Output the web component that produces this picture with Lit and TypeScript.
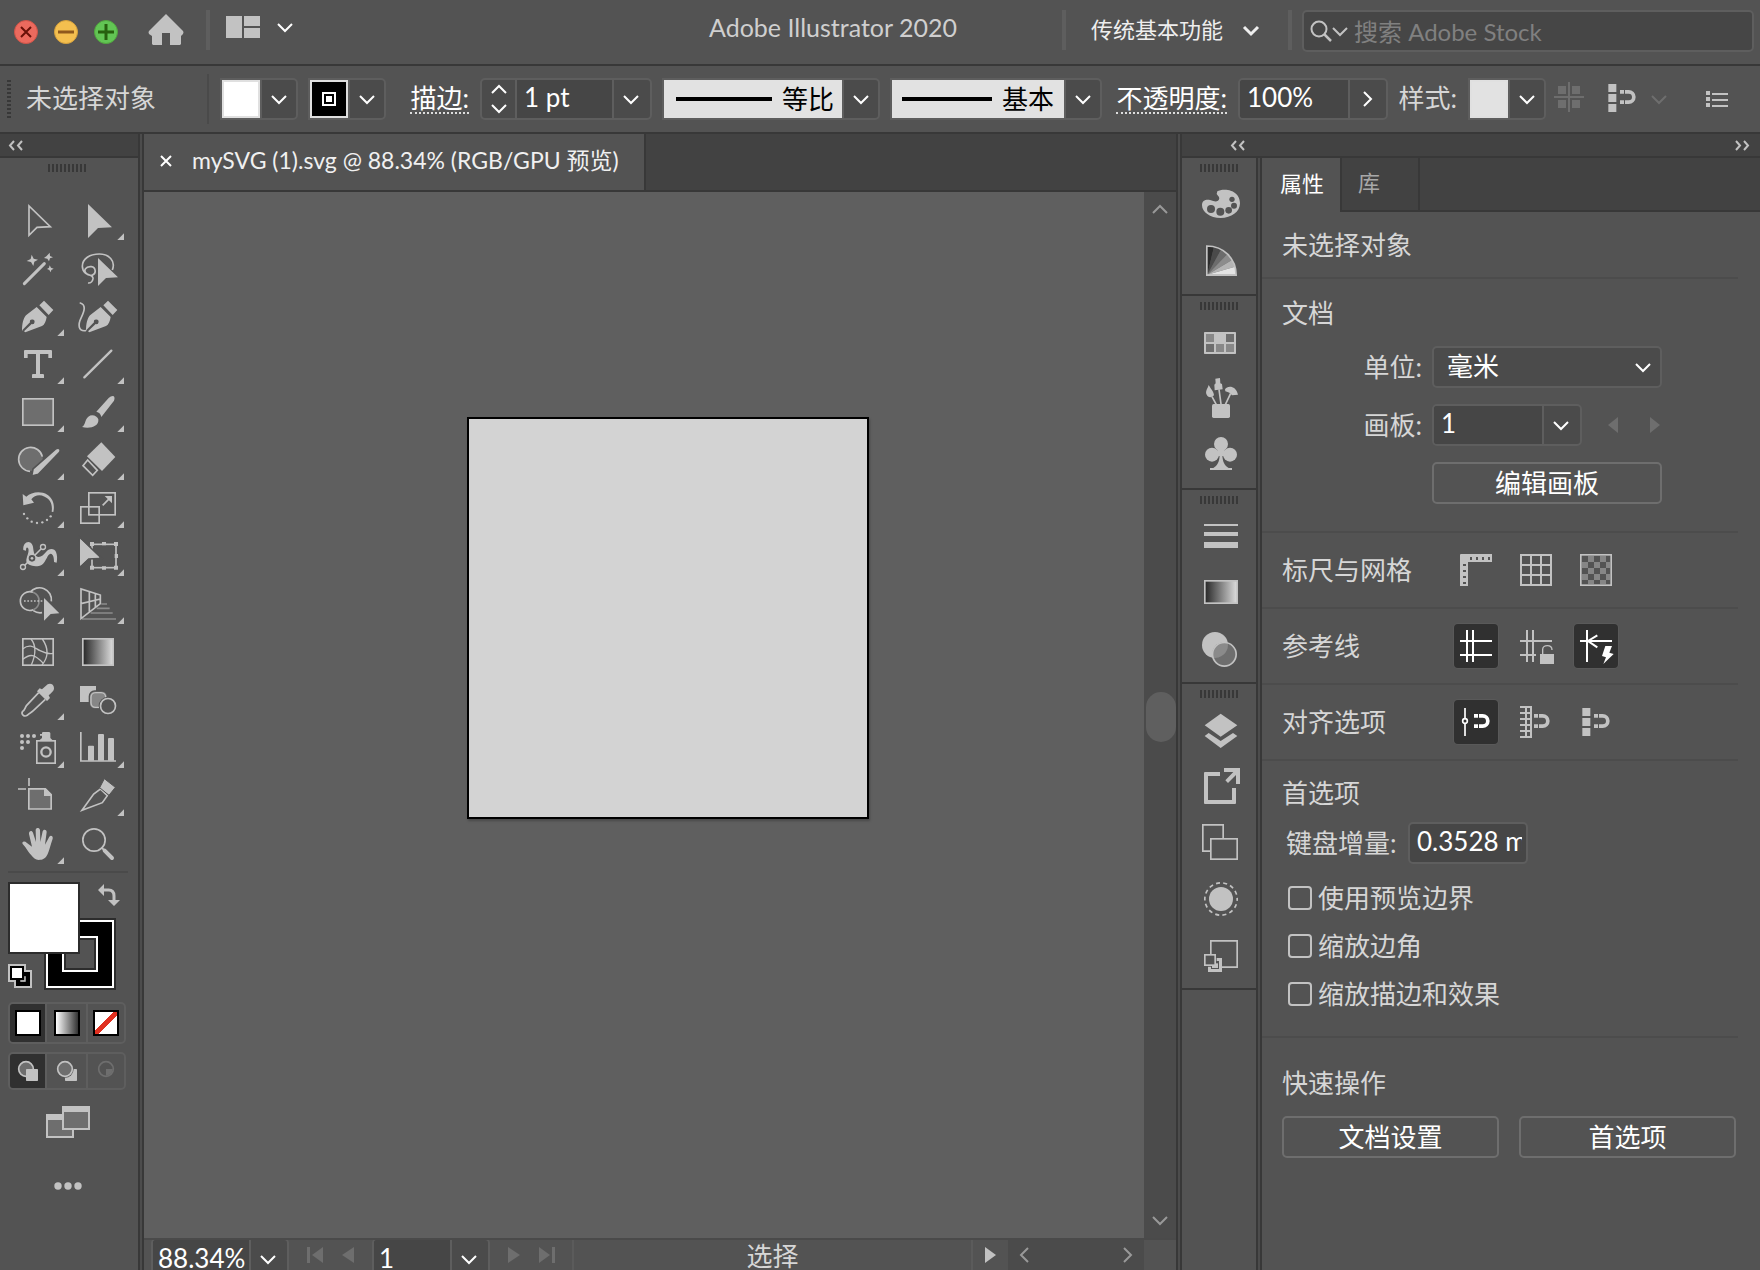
import { LitElement, html, svg, css, nothing } from "lit";
import { customElement, state } from "lit/decorators.js";
import { classMap } from "lit/directives/class-map.js";

type Glyph = ReturnType<typeof svg>;

interface Tool {
  name: string;
  more: boolean;
  glyph: Glyph;
}

/* Drawings use three units to the pixel; each sheet lists glyphs in rows. */
const UNIT = 3;

const tools: Tool[] = [
  { name: "选择工具", more: false, glyph: svg`<path class="line" stroke-width="5" d="M87 48V136L111 112L151 110Z"/>` },
  { name: "直接选择工具", more: true, glyph: svg`<path class="solid" d="M264 42V144L294 114L336 112Z"/>` },
  { name: "魔棒工具", more: false, glyph: svg`
    <path class="line" stroke-width="9" stroke-linecap="round" d="M73 281L133 221"/>
    <path class="solid" d="M95 194L101 206L114 209L103 215L100 228L93 216L80 213L92 207ZM149 188L150 198L159 202L150 205L147 214L142 206L132 204L140 198ZM149 226L153 233L161 236L154 240L152 247L148 240L141 237L147 233Z"/>` },
  { name: "套索工具", more: false, glyph: svg`
    <path class="line" stroke-width="5" d="M337 240C348 212 326 192 298 192C270 192 247 206 247 229C247 246 262 258 276 256C290 252 288 232 274 230C258 228 248 242 260 251C270 258 280 256 279 266C278 274 272 280 264 279"/>
    <path class="solid" d="M294 204V288L318 264L354 262Z"/>` },
  { name: "钢笔工具", more: true, glyph: svg`
    <path class="solid" d="M118 346L132 332L160 360L146 375ZM66 424C66 400 70 386 78 376L110 351L140 381C138 394 134 404 126 408L76 427L72 424L95 402A7 7 0 1 0 90 397L68 419Z"/>` },
  { name: "曲率工具", more: false, glyph: svg`
    <path class="solid" d="M310 346L324 332L352 360L338 375ZM258 424C258 400 262 386 270 376L302 351L332 381C330 394 326 404 318 408L268 427L264 424L287 402A7 7 0 1 0 282 397L260 419Z"/>
    <path class="line" stroke-width="5" stroke-linecap="round" d="M241 339C258 344 254 362 244 382C232 406 236 424 256 422"/>` },
  { name: "文字工具", more: true, glyph: svg`<path class="solid" d="M74 480H154L156 482V504H145V492H120V552H130L132 554V564H96V554L98 552H108V492H83V504H72V482Z"/>` },
  { name: "直线段工具", more: true, glyph: svg`<path class="line" stroke-width="7" stroke-linecap="round" d="M253 562L334 482"/>` },
  { name: "矩形工具", more: true, glyph: svg`<rect class="tint" x="68.5" y="626.5" width="91" height="79" stroke-width="5"/>` },
  { name: "画笔工具", more: true, glyph: svg`
    <path class="solid" d="M340 618Q346 622 342 632L304 681Q302 668 289 665L326 624Q333 617 340 618ZM246 711C257 705 254 688 265 680C277 671 292 679 295 688C298 710 268 718 246 711Z"/>` },
  { name: "Shaper 工具", more: true, glyph: svg`
    <circle class="mid" cx="92" cy="807" r="36"/>
    <path class="line" stroke-width="5" d="M127 800A36 36 0 1 0 90 844"/>
    <path class="solid ring" stroke-width="5" d="M95 858L99 837L168 776Q176 772 180 778Q182 784 178 788L115 853Z"/>` },
  { name: "橡皮擦工具", more: true, glyph: svg`
    <path class="solid" d="M304 757L346 801L306 843L261 799Z"/>
    <path class="line" stroke-width="5" d="M263 810L292 841L278 856L249 827Z"/>` },
  { name: "旋转工具", more: true, glyph: svg`
    <path class="solid" d="M68 912L79 920C94 906 122 902 142 914C162 928 164 948 160 966L155 965C158 944 152 928 134 920C118 912 104 916 94 928L102 938L70 946Z"/>
    <g class="solid"><circle cx="72" cy="972" r="3.5"/><circle cx="82" cy="985" r="3.5"/><circle cx="95" cy="995" r="3.5"/><circle cx="111" cy="999" r="3.5"/><circle cx="127" cy="997" r="3.5"/><circle cx="141" cy="990" r="3.5"/><circle cx="152" cy="979" r="3.5"/></g>` },
  { name: "比例缩放工具", more: true, glyph: svg`
    <rect class="line" x="266.500" y="908.500" width="79" height="66" stroke-width="5"/>
    <rect class="line" x="242.500" y="950.500" width="55" height="49" stroke-width="5"/>
    <path class="line" stroke-width="5" d="M308 946L328 926"/><path class="solid" d="M336 918V940L314 918Z"/>` },
  { name: "宽度工具", more: true, glyph: svg`
    <path class="solid" d="M70 60C68 40 82 32 92 38C104 46 96 66 108 78C118 86 130 76 138 66C146 54 164 54 168 66C172 76 172 88 170 98L162 96C162 84 160 72 152 71C142 72 140 92 126 104C108 114 80 106 79 94C78 82 90 64 84 54C80 50 78 54 78 62Z"/>
    <path class="line" stroke-width="5" d="M75 105L123 57"/>
    <circle class="hollow" cx="69" cy="111" r="7.500" stroke-width="4"/><circle class="hollow" cx="129" cy="51" r="7.500" stroke-width="4"/>
    <circle class="hollow" cx="96" cy="85" r="12" stroke-width="4"/><circle class="solid" cx="96" cy="85" r="4"/>` },
  { name: "自由变换工具", more: true, glyph: svg`
    <rect class="line" x="276" y="43" width="72" height="70" stroke-width="5"/>
    <path class="solid" d="M270 36h12v12h-12zM342 36h12v12h-12zM270 107h12v12h-12zM342 107h12v12h-12zM306 36h12v10h-12zM306 109h12v10h-12zM344 72h10v12h-10z"/>
    <path class="solid ring" stroke-width="5" d="M239 22V112L266 87L304 85Z"/><path class="solid" d="M240 26V108L264 84L298 82Z"/>` },
  { name: "形状生成器工具", more: true, glyph: svg`
    <path class="line" stroke-width="5" d="M100 239A28 28 0 1 1 99 187M90 187A36 36 0 0 1 154 214M100 242A36 36 0 0 0 126 248"/>
    <path class="dim" stroke-width="5" d="M99 187A28 28 0 0 1 100 239"/>
    <path class="line" stroke-width="5" stroke-dasharray="5 5" d="M72 213H128"/>
    <path class="solid" d="M132 204V272L152 252L178 250Z"/>` },
  { name: "透视网格工具", more: true, glyph: svg`
    <path class="dim" stroke-width="5" d="M304 222H321M290 235H329M272 249H338M246 267H348"/>
    <path class="line" stroke-width="5" d="M243 177V266L301 221V195ZM268 186V246M286 190V232M243 221L301 207"/>` },
  { name: "网格工具", more: false, glyph: svg`
    <rect class="line" x="68.500" y="326.500" width="91" height="79" stroke-width="5"/>
    <path class="line" stroke-width="4" d="M93 327C112 350 104 382 94 405M127 327C140 346 150 376 126 405M69 356C92 338 106 356 120 362C136 370 150 372 159 370M69 388C90 370 104 372 130 400"/>` },
  { name: "渐变工具", more: false, glyph: svg`<rect x="248.500" y="326.500" width="91" height="79" fill="url(#ramp)" class="edge" stroke-width="5"/>` },
  { name: "吸管工具", more: true, glyph: svg`
    <path class="solid" d="M111 484L119 475L126 478L143 463C150 458 162 462 162 474C162 480 160 484 146 496L150 504L141 513Z"/>
    <path class="line" stroke-width="5" d="M116 488L80 526C74 534 76 538 68 544C62 552 72 562 82 556C88 548 92 550 100 542L136 508"/>` },
  { name: "混合工具", more: false, glyph: svg`
    <rect class="solid" x="240" y="468" width="48" height="48"/>
    <rect class="shade ring" x="268" y="483" width="54" height="54" rx="16" stroke-width="4"/>
    <rect class="shade edge" x="273" y="488" width="44" height="44" rx="14" stroke-width="4"/>
    <circle class="flat" cx="324" cy="528" r="28"/><circle class="hollow" cx="324" cy="528" r="22.500" stroke-width="5"/>` },
  { name: "符号喷枪工具", more: true, glyph: svg`
    <g class="solid"><circle cx="66" cy="618" r="6"/><circle cx="84" cy="618" r="6"/><circle cx="102" cy="618" r="6"/><circle cx="66" cy="636" r="6"/><circle cx="84" cy="636" r="6"/><circle cx="66" cy="654" r="6"/>
    <path d="M128 606H148L151 609V624L157 630H119L126 624V609ZM120 612h6v5h-6z"/></g>
    <rect class="line" x="110.500" y="632.500" width="55" height="67" stroke-width="5"/><circle class="line" cx="138" cy="666" r="14" stroke-width="7"/>` },
  { name: "柱形图工具", more: true, glyph: svg`
    <path class="line" stroke-width="5" d="M242.500 606V693H348"/>
    <path class="solid" d="M264 649l2-2h14l2 2V692H264zM294 614l2-2h14l2 2V692H294zM324 626l2-2h14l2 2V692H324z"/>` },
  { name: "画板工具", more: false, glyph: svg`
    <path class="line" stroke-width="5" d="M87 744V768M54 777H78"/>
    <path class="tint" stroke-width="5" d="M86.500 776.500H136L153.500 794V837H86.500Z"/><path class="solid" d="M132 776H138L155 794V798H132Z"/>` },
  { name: "切片工具", more: true, glyph: svg`
    <path class="line" stroke-width="5" d="M246 841L281 792L301 777L322 797L307 818Z"/>
    <path class="solid ring" stroke-width="3" d="M313 746L346 772L327 796L299 773Z"/>` },
  { name: "抓手工具", more: true, glyph: svg`
    <path class="solid" d="M94 976C84 966 80 954 68 942C64 934 74 932 80 938L96 950L87 912C86 902 96 900 99 908L108 936L107 900C108 892 118 892 120 900L121 936L128 904C130 896 140 898 140 906L135 944L148 920C152 914 160 918 158 926C152 944 148 960 144 970C138 986 128 990 116 990C106 990 100 984 94 976Z"/>` },
  { name: "缩放工具", more: false, glyph: svg`
    <circle class="line" cx="282" cy="930" r="33.500" stroke-width="5"/>
    <path class="line" stroke-width="6" d="M304 952L314 962"/><path class="line" stroke-width="12" stroke-linecap="round" d="M314 962L336 984"/>` },
];

const ramp = svg`<defs>
  <linearGradient id="ramp"><stop offset="0" stop-color="#262626"/><stop offset="1" stop-color="#dedede"/></linearGradient>
</defs>`;

interface Panel {
  name: string;
  y: number;
  glyph: Glyph;
}

const dock: Panel[][] = [
  [
    { name: "颜色", y: 138, glyph: svg`
      <path class="solid" d="M262 184C270 178 292 178 302 182C320 188 330 202 330 220C330 246 304 264 272 264C240 264 216 246 216 226C216 212 226 208 240 210C252 214 258 216 264 212C274 204 262 196 260 192Z"/>
      <g class="flat"><circle cx="243" cy="237" r="12"/><circle cx="271" cy="245" r="12"/><circle cx="296" cy="241" r="10"/><circle cx="312" cy="227" r="9"/><circle cx="306" cy="208" r="8"/></g>` },
    { name: "颜色参考", y: 306, glyph: svg`
      <path fill="#2c2c2c" d="M232 434V348L252 350Z"/><path fill="#4a4a4a" d="M232 434L252 350L274 357Z"/><path fill="#6c6c6c" d="M232 434L274 357L292 372Z"/><path fill="#8c8c8c" d="M232 434L292 372L306 390Z"/><path fill="#b4b4b4" d="M232 434L306 390L315 410Z"/><path fill="#e4e4e4" d="M232 434L315 410L318 434Z"/>
      <path class="line" stroke-width="5" d="M230.500 348V435.500H318.500C318 386 282 348 230.500 348Z"/>` },
  ],
  [
    { name: "色板", y: 552, glyph: svg`
      <rect class="solid" x="222" y="606" width="96" height="66" rx="2"/>
      <path fill="#888" d="M228 612h24v24h-24zM258 642h24v24h-24zM288 642h24v24h-24z"/><path fill="#6e6e6e" d="M228 642h24v24h-24zM288 612h24v24h-24z"/>` },
    { name: "画笔", y: 720, glyph: svg`
      <rect class="solid" x="246" y="822" width="54" height="42" rx="5"/>
      <path class="line" stroke-width="5" d="M246 800L259 824M267 778L273 822M302 790L286 824"/>
      <path class="solid" d="M236 765C234 774 226 782 229 792C234 804 244 804 252 796C252 786 242 776 236 765ZM256 746L270 744L271 760L276 762L278 778L254 781L253 764L257 760ZM285 778C292 766 318 766 324 794L306 796C302 790 296 786 286 784Z"/>` },
    { name: "符号", y: 888, glyph: svg`
      <g class="solid"><circle cx="273" cy="942" r="21"/><circle cx="246" cy="974" r="21"/><circle cx="300" cy="974" r="21"/><rect x="262" y="954" width="22" height="24"/>
      <path d="M269 976H277C278 996 284 1008 296 1014H306V1020H240V1014H250C262 1008 268 996 269 976Z"/></g>` },
  ],
  [
    { name: "描边", y: 1134, glyph: svg`<path class="solid" d="M222 1182h102v6H222zM222 1206h102v12H222zM222 1236h102v18H222z"/>` },
    { name: "渐变", y: 42, glyph: svg`<rect x="224.500" y="92.500" width="97" height="67" fill="url(#ramp)" class="edge" stroke-width="5"/>` },
    { name: "透明度", y: 210, glyph: svg`
      <circle class="solid" cx="255" cy="285" r="39"/><circle class="mid" cx="283" cy="313" r="36"/>
      <path fill="#8a8a8a" d="M294 284A39 39 0 0 1 248 323A36 36 0 0 1 292 278Z"/><circle class="line" cx="283" cy="313" r="35.500" stroke-width="5"/>` },
  ],
  [
    { name: "图层", y: 456, glyph: svg`<path class="solid" d="M272 491L322 526L272 560L224 526ZM236 549L272 573L309 549L322 558L272 594L224 558Z"/>` },
    { name: "资源导出", y: 624, glyph: svg`
      <path class="solid" d="M224 666H270V678H234V750H306V714H318V760L316 762H224L222 760V668ZM282 654H330V702H318V675L294 699L286 691L310 666H282Z"/>` },
    { name: "画板", y: 792, glyph: svg`
      <path class="line" stroke-width="5" d="M242 903.500H218.500V824.500H279.500V864"/><rect class="line" x="242.500" y="866.500" width="79" height="61" stroke-width="5"/>` },
    { name: "外观", y: 960, glyph: svg`
      <circle class="solid" cx="273" cy="1047" r="36"/><circle class="line" cx="273" cy="1047" r="48.500" stroke-width="5" stroke-dasharray="12 9.800" stroke-dashoffset="6"/>` },
    { name: "图形样式", y: 1128, glyph: svg`
      <path class="line" stroke-width="5" d="M242.500 1212V1172.500H321.500V1251.500H276"/>
      <path class="line" stroke-width="9" d="M260 1228.500H271.500V1261.500H238.500V1250"/>
      <rect class="solid" x="246" y="1240" width="18" height="14"/>
      <rect class="hollow" x="224.500" y="1214.500" width="31" height="31" stroke-width="5"/>` },
  ],
];

/* Magnet shared by the snap buttons, drawn relative to its left edge. */
const magnet = (x: number, y: number) => svg`
  <g transform="translate(${x} ${y})"><path class="line" stroke-width="11" d="M15 5.500H26A15.500 15.500 0 0 1 26 36.500H15"/>
  <path class="solid" d="M0 0h12v11H0zM0 31h12v11H0z"/></g>`;

const snapPoint = svg`<path class="solid" d="M25 24h24v24h-24zM25 54h24v24h-24zM25 84h24v24h-24z"/>${magnet(60, 42)}`;

interface Option {
  name: string;
  on: boolean;
  glyph: Glyph;
}

const checks = [0, 1, 2, 3, 4].flatMap((r) =>
  [0, 1, 2, 3, 4].filter((c) => (r + c) % 2 === 1).map((c) => svg`<rect fill="#868686" x=${24 + c * 18} y=${24 + r * 18} width=${c === 4 ? 12 : 18} height=${r === 4 ? 12 : 18} />`)
);

const optionRows: { title: string; items: Option[] }[] = [
  {
    title: "标尺与网格",
    items: [
      { name: "显示标尺", on: false, glyph: svg`
        <path class="solid" d="M20 18H114V42H42V114H18V20Z"/>
        <path class="flat" d="M48 27h6v9h-6zM66 27h6v9h-6zM84 27h6v9h-6zM102 27h6v9h-6zM27 48h9v6h-9zM27 66h9v6h-9zM27 84h9v6h-9zM27 102h9v6h-9z"/>` },
      { name: "显示网格", on: false, glyph: svg`<path class="line" stroke-width="6" d="M21 21H111V111H21ZM51 21V111M81 21V111M21 51H111M21 81H111"/>` },
      { name: "显示透明度网格", on: false, glyph: svg`${checks}<rect class="line" x="20.500" y="20.500" width="91" height="91" stroke-width="5"/>` },
    ],
  },
  {
    title: "参考线",
    items: [
      { name: "显示参考线", on: true, glyph: svg`<path class="line" stroke-width="6" d="M39 18V114M57 18V114M18 51H114M18 93H114"/>` },
      { name: "锁定参考线", on: false, glyph: svg`
        <path class="line" stroke-width="6" d="M39 18V114M57 18V114M18 51H114M18 93H66"/>
        <rect class="solid ring" x="76" y="88" width="46" height="34" rx="2" stroke-width="4"/><path class="line" stroke-width="4" d="M86 90V76C86 62 114 60 114 78"/>` },
      { name: "智能参考线", on: true, glyph: svg`
        <path class="line" stroke-width="6" d="M39 18V114M18 51H114M70 34L42 51L70 70"/>
        <path class="solid" d="M94 66H114L106 86L119 90L88 120L96 100L84 96Z"/>` },
    ],
  },
  {
    title: "对齐选项",
    items: [
      { name: "对齐点", on: true, glyph: svg`<path class="line" stroke-width="5" d="M33 24V57M33 70V108"/><circle class="line" cx="33" cy="63" r="7" stroke-width="5"/>${magnet(60, 42)}` },
      { name: "对齐网格", on: false, glyph: svg`<path class="line" stroke-width="6" d="M36 18V114M51 18V114M18 21H54M18 39H54M18 57H54M18 75H54M18 93H54M18 111H54"/>${magnet(60, 42)}` },
      { name: "对齐像素", on: false, glyph: snapPoint },
    ],
  },
];

const chevronDown = html`<svg class="chev" viewBox="0 0 16 9" aria-hidden="true"><path d="M1 1L8 8L15 1"/></svg>`;
const chevronUp = html`<svg class="chev" viewBox="0 0 16 9" aria-hidden="true"><path d="M1 8L8 1L15 8"/></svg>`;
const chevronRight = html`<svg class="side" viewBox="0 0 9 16" aria-hidden="true"><path d="M1 1L8 8L1 15"/></svg>`;
const chevronLeft = html`<svg class="side" viewBox="0 0 9 16" aria-hidden="true"><path d="M8 1L1 8L8 15"/></svg>`;
const doubleLeft = html`<svg class="double" viewBox="0 0 14 11" aria-hidden="true"><path d="M5 1L1 5.500L5 10M13 1L9 5.500L13 10"/></svg>`;
const doubleRight = html`<svg class="double" viewBox="0 0 14 11" aria-hidden="true"><path d="M1 1L5 5.500L1 10M9 1L13 5.500L9 10"/></svg>`;

@customElement("app-root")
export class AppRoot extends LitElement {
  @state() private activeTool = -1;
  @state() private paint = 0;
  @state() private drawMode = 0;

  static styles = css`
    :host {
      --base: #535353;
      --dark: #424242;
      --seam: #383838;
      --field: #464646;
      --press: #4b4b4b;
      --edge: #5e5e5e;
      --icon: #c2c2c2;
      --text: #d6d6d6;
      display: flex;
      flex-direction: column;
      height: 100vh;
      overflow: hidden;
      background: var(--base);
      color: var(--text);
      font-family: Lato, "Noto Sans CJK SC", sans-serif;
      font-size: 26px;
      line-height: 30px;
    }
    * { box-sizing: border-box; }
    button, input, select {
      margin: 0;
      padding: 0;
      border: 0;
      border-radius: 0;
      background: none;
      color: #fff;
      font: inherit;
      outline: none;
      min-width: 0;
    }
    button { display: flex; align-items: center; justify-content: center; flex: none; }
    h2 { margin: 0; font-size: 26px; line-height: 30px; font-weight: 400; }
    svg { display: block; flex: none; overflow: visible; }

    .solid { fill: var(--icon); }
    .line { fill: none; stroke: var(--icon); }
    .edge { stroke: var(--icon); }
    .dim { fill: none; stroke: #8c8c8c; }
    .mid { fill: #6e6e6e; }
    .tint { fill: #6e6e6e; stroke: var(--icon); }
    .hollow { fill: var(--base); stroke: var(--icon); }
    .flat { fill: var(--base); }
    .shade { fill: #868686; }
    .ring { stroke: var(--base); }
    .chev { width: 16px; height: 9px; }
    .side { width: 9px; height: 16px; }
    .double { width: 14px; height: 11px; }
    .chev path, .side path { fill: none; stroke: currentColor; stroke-width: 2; }
    .double path { fill: none; stroke: var(--icon); stroke-width: 2; }

    .titlebar {
      display: flex;
      flex: none;
      height: 66px;
      border-bottom: 2px solid var(--seam);
      padding: 10px 6px 0 14px;
      align-items: flex-start;
    }
    .lights { display: flex; gap: 16px; padding-top: 10px; }
    .light { width: 24px; height: 24px; }
    .light svg { width: 24px; height: 24px; }
    .home { margin: 4px 22px 0 30px; width: 36px; height: 32px; }
    .rule { flex: none; width: 4px; height: 40px; background: var(--edge); }
    .arrange { margin: 6px 0 0 16px; gap: 17px; color: #fff; height: 22px; }
    .title { flex: 1; padding: 2px 105px 0 0; text-align: right; font-size: 25px; line-height: 30px; color: #cfcfcf; white-space: nowrap; }
    .workspace { margin: 5px 29px 0 25px; gap: 20px; font-size: 22px; line-height: 30px; color: #eee; }
    .workspace .chev path { stroke-width: 3; }
    .search {
      display: flex;
      align-items: center;
      width: 452px;
      height: 42px;
      margin-left: 10px;
      border: 2px solid var(--edge);
      border-radius: 5px;
      background: var(--field);
      color: var(--icon);
      padding: 0 6px;
    }
    .search .glass { width: 22px; height: 22px; }
    .search .chev { margin: 0 6px 0 0; }
    .search input { flex: 1; padding-top: 2px; font-size: 24px; }
    .search input::placeholder { color: #808080; opacity: 1; }

    .controls {
      display: flex;
      flex: none;
      align-items: center;
      height: 68px;
      border-bottom: 2px solid var(--seam);
      padding: 0 32px 0 7px;
    }
    .grip-v { width: 4px; height: 38px; background: repeating-linear-gradient(var(--seam) 0 2px, transparent 2px 4px); }
    .state { width: 181px; margin-left: 15px; padding-bottom: 2px; }
    .thin { width: 2px; height: 50px; background: #4a4a4a; margin-right: 11px; }
    .box {
      display: flex;
      flex: none;
      height: 42px;
      border: 2px solid var(--edge);
      border-radius: 5px;
      background: var(--press);
      overflow: hidden;
    }
    .box.left-flat { border-radius: 0 5px 5px 0; }
    .gap { margin-left: 10px; }
    .drop { width: 36px; border-left: 2px solid var(--edge); }
    .box input + .drop { width: 38px; padding-right: 2px; }
    .swatch { width: 38px; border: 2px solid #e0e0e0; }
    .swatch.fill { background: #fff; }
    .swatch.stroke { background: #000; }
    .swatch.style { background: #e2e2e2; }
    .tag { display: flex; justify-content: flex-end; padding-right: 11px; flex: none; color: #fff; }
    .tag span { border-bottom: 2px dotted #ddd; line-height: 28px; }
    .tag.plain { color: var(--text); }
    .tag.plain span { border-color: transparent; }
    .tag.w1 { width: 94px; }
    .tag.w2 { width: 136px; }
    .tag.w3 { width: 80px; }
    .steps { display: flex; flex-direction: column; width: 33px; }
    .steps button { flex: 1; }
    .box input { background: var(--field); padding: 0 0 4px 7px; }
    .steps + input { border-left: 2px solid var(--edge); }
    .w-weight { width: 172px; }
    .w-weight input { flex: 1; }
    .w-opacity { width: 150px; }
    .w-opacity input { flex: 1; }
    .preview { background: #e2e2e2; color: #000; justify-content: space-between; padding: 0 8px 0 12px; }
    .preview.a { width: 178px; }
    .preview.b { width: 172px; padding: 0 10px; }
    .preview i { height: 4px; background: #000; }
    .preview.a i { width: 96px; }
    .preview.b i { width: 90px; }
    .cells { width: 30px; height: 30px; margin: 0 16px 4px 8px; }
    .snap { width: 44px; height: 44px; margin-bottom: 2px; }
    .snap svg { width: 44px; height: 44px; }
    .off { color: #6e6e6e; }
    .snapmore { margin-left: 7px; }
    .list { margin-left: auto; width: 22px; height: 16px; }

    .work { display: flex; flex: 1; min-height: 0; }
    .seam { flex: none; width: 6px; border: solid var(--seam); border-width: 0 2px; background: #4c4c4c; }
    .bar {
      display: flex;
      align-items: center;
      flex: none;
      height: 24px;
      background: var(--dark);
      border-bottom: 2px solid var(--seam);
    }
    .grip { height: 8px; width: 38px; background: repeating-linear-gradient(90deg, var(--seam) 0 2px, transparent 2px 4px); }

    .toolbox { display: flex; flex-direction: column; flex: none; width: 138px; }
    .toolbox .bar { padding-left: 9px; }
    .toolbox .grip { margin: 6px 0 24px 48px; flex: none; }
    .tools { display: grid; grid-template-columns: 60px 60px; grid-auto-rows: 48px; padding-left: 8px; }
    .tool svg { width: 60px; height: 48px; }
    .tool.active { background: #303030; }
    .split { flex: none; height: 2px; margin: 3px 10px 9px 8px; background: #4a4a4a; }
    .paint { display: grid; flex: none; grid-template: repeat(3, 36px) / repeat(3, 36px); margin-left: 8px; }
    .paint .f { grid-area: 1 / 1 / 3 / 3; background: #fff; border: 2px solid #2c2c2c; z-index: 1; }
    .paint .s { grid-area: 2 / 2 / 4 / 4; }
    .paint .s svg { width: 72px; height: 72px; }
    .paint .swap { grid-area: 1 / 3; }
    .paint .reset { grid-area: 3 / 1; }
    .paint .swap svg, .paint .reset svg { width: 36px; height: 36px; }
    .seg {
      display: grid;
      flex: none;
      grid-template-columns: 35px 41px 38px;
      width: 118px;
      height: 42px;
      margin: 12px 0 0 8px;
      border: 2px solid var(--edge);
      border-radius: 5px;
      overflow: hidden;
    }
    .seg.low { height: 38px; margin-top: 8px; }
    .seg button + button { border-left: 2px solid var(--edge); }
    .seg button.on { background: #303030; }
    .seg svg { width: 20px; height: 20px; }
    .chip { width: 26px; height: 26px; border: 2px solid #000; background: #fff; }
    .chip.grad { background: linear-gradient(90deg, #fff, #333); }
    .chip.none { background: linear-gradient(135deg, #fff 42%, #e03020 42% 58%, #fff 58%); }
    .screen { margin: 16px 0 44px 46px; width: 44px; height: 32px; }
    .dots { margin-left: 56px; width: 24px; height: 8px; }

    .doc { display: flex; flex-direction: column; flex: 1; min-width: 0; }
    .tabs { display: flex; flex: none; height: 58px; background: var(--dark); border-bottom: 2px solid var(--seam); }
    .tab { display: flex; align-items: center; width: 502px; padding: 0 0 4px 16px; gap: 20px; background: var(--base); border-right: 2px solid var(--seam); font-size: 23px; color: #f0f0f0; white-space: nowrap; }
    .tab button svg { width: 12px; height: 12px; margin-top: 2px; }
    .view { display: flex; flex: 1; min-height: 0; }
    .canvas { position: relative; flex: 1; min-width: 0; overflow: hidden; background: #5f5f5f; }
    .artboard { position: absolute; left: 323px; top: 225px; width: 402px; height: 402px; background: #d3d3d3; border: 2px solid #000; box-shadow: 1px 2px 2px #4a4a4a; }
    .scroll { display: flex; flex-direction: column; flex: none; align-items: center; width: 32px; padding: 13px 0; background: var(--press); }
    .scroll button, .hscroll button { color: #999; }
    .thumb { width: 30px; height: 50px; border-radius: 15px; background: #5f5f5f; margin: 478px 0 auto 2px; }
    .status { display: flex; flex: none; height: 32px; overflow: hidden; border-top: 2px solid #4a4a4a; align-items: flex-start; }
    .status .box { height: 42px; margin-top: -2px; }
    .status .box input { padding: 0 0 2px 5px; }
    .zoom { width: 138px; margin-left: 7px; }
    .zoom input, .page input { flex: 1; }
    .page { width: 118px; margin-left: 18px; }
    .nav { display: flex; align-items: center; height: 30px; color: #6e6e6e; }
    .nav.back { margin-left: 18px; gap: 19px; }
    .nav.fore { margin-left: 18px; gap: 19px; padding-right: 17px; border-right: 2px solid #5b5b5b; }
    .nav svg { height: 16px; }
    .nav .one { width: 12px; }
    .nav .end { width: 16px; }
    .mode { flex: 1; height: 30px; line-height: 30px; padding-top: 1px; text-align: center; border-right: 2px solid #5b5b5b; }
    .play { width: 35px; height: 30px; }
    .play svg { width: 11px; height: 18px; }
    .hscroll { display: flex; flex: none; align-items: flex-start; justify-content: space-between; width: 136px; height: 34px; margin-top: -2px; padding: 9px 12px; background: var(--press); }
    .corner { flex: none; width: 32px; }

    .right { display: flex; flex-direction: column; flex: none; width: 578px; }
    .right .bar { justify-content: space-between; padding: 0 11px 0 49px; }
    .body { display: flex; flex: 1; min-height: 0; }
    .dock { flex: none; width: 74px; }
    .group { display: flex; flex-direction: column; padding: 6px 0; border-bottom: 2px solid var(--seam); }
    .group .grip { margin: 0 0 4px 18px; }
    .group svg { width: 74px; height: 56px; }

    .panel { flex: 1; min-width: 0; }
    .ptabs { display: flex; height: 54px; }
    .ptabs button { padding-bottom: 2px; font-size: 22px; }
    .ptabs .on { width: 78px; padding-left: 2px; }
    .ptabs .idle { width: 80px; justify-content: flex-start; padding-left: 16px; background: var(--dark); color: #a8a8a8; border: solid var(--seam); border-width: 0 2px 2px; }
    .ptabs div { flex: 1; background: var(--dark); border-bottom: 2px solid var(--seam); }
    .sec { margin-right: 22px; padding-left: 20px; border-bottom: 2px solid #4c4c4c; }
    .sec.none { height: 67px; display: flex; align-items: center; }
    .sec.docs { padding-top: 19px; padding-bottom: 27px; }
    .field { display: grid; grid-template-columns: 140px 230px; column-gap: 10px; align-items: center; height: 42px; margin-top: 16px; }
    .field.first { margin-top: 18px; }
    .field label { text-align: right; }
    .pick { display: grid; grid-template: 42px / 1fr 44px; align-items: center; }
    .pick select { grid-area: 1 / 1 / 2 / 3; height: 42px; appearance: none; border: 2px solid var(--edge); border-radius: 5px; background: var(--press); padding: 0 0 2px 13px; }
    .pick .chev { grid-area: 1 / 2; margin-left: 17px; pointer-events: none; color: #fff; }
    .pager { display: flex; align-items: center; }
    .pager .box { width: 150px; margin-right: 26px; }
    .pager .box input { flex: 1; }
    .pager button { flex: none; }
    .pager .tri + .tri { margin-left: 32px; }
    .tri svg { width: 10px; height: 16px; }
    .push { height: 42px; border: 2px solid #6e6e6e; border-radius: 5px; }
    .field .push { grid-column: 2; }
    .opts { display: flex; align-items: center; height: 76px; }
    .opts h2 { width: 172px; }
    .opts .row { display: flex; gap: 16px; }
    .opt { width: 44px; height: 44px; border-radius: 4px; }
    .opt svg { width: 44px; height: 44px; }
    .opt.on { --icon: #fff; background: #303030; box-shadow: 0 0 0 1px #595959; }
    .prefs { padding-top: 17px; padding-bottom: 18px; }
    .key { display: flex; align-items: center; gap: 11px; margin: 14px 0 10px 4px; height: 42px; }
    .key label { width: 111px; white-space: nowrap; }
    .key input { width: 120px; height: 42px; border: 2px solid var(--edge); border-radius: 5px; background: var(--field); padding: 0 4px 4px 7px; }
    .tick { display: flex; align-items: center; height: 48px; gap: 6px; padding-left: 6px; }
    .tick input { flex: none; appearance: none; width: 24px; height: 24px; border: 2px solid var(--icon); border-radius: 4px; }
    .tick input:checked { background: #fff; }
    .quick { padding: 30px 24px 0 20px; }
    .quick .row { display: flex; gap: 20px; margin-top: 18px; }
    .quick .push { flex: 1; }
  `;

  private renderTool(tool: Tool, i: number) {
    const row = Math.floor(i / 2);
    const x = i % 2 ? 204 : 24;
    const y = row < 7 ? 18 + 144 * row : 144 * row - 1002;
    return html`<button
      class=${classMap({ tool: true, active: this.activeTool === i })}
      aria-label=${tool.name}
      @click=${() => (this.activeTool = i)}
    >
      <svg viewBox="${x} ${y} ${60 * UNIT} ${48 * UNIT}" aria-hidden="true">
        ${i === 19 ? ramp : nothing}${tool.glyph}
        ${tool.more ? svg`<path class="solid" d="M${x + 168} ${y + 112}V${y + 132}H${x + 148}Z"/>` : nothing}
      </svg>
    </button>`;
  }

  private renderTitle() {
    return html`<header class="titlebar">
      <div class="lights">
        <button class="light" aria-label="关闭"><svg viewBox="0 0 24 24"><circle cx="12" cy="12" r="11.500" fill="#ec6a5e" stroke="#cf5448"/><path d="M7 7L17 17M17 7L7 17" stroke="#6a1109" stroke-width="2"/></svg></button>
        <button class="light" aria-label="最小化"><svg viewBox="0 0 24 24"><circle cx="12" cy="12" r="11.500" fill="#f4bf4f" stroke="#d6a13c"/><path d="M4 12H20" stroke="#8f591d" stroke-width="3"/></svg></button>
        <button class="light" aria-label="缩放"><svg viewBox="0 0 24 24"><circle cx="12" cy="12" r="11.500" fill="#62c554" stroke="#51a73e"/><path d="M4 12H20M12 4V20" stroke="#27610f" stroke-width="3"/></svg></button>
      </div>
      <button class="home" aria-label="主页"><svg width="36" height="32" viewBox="0 0 36 32"><path class="solid" d="M18 0L35 17Q36 18 35 20L33 22V30L32 31H22V19H14V31H5L4 30V22L1 20Q0 18 1 17Z"/></svg></button>
      <div class="rule"></div>
      <button class="arrange" aria-label="排列文档"><svg width="34" height="22" viewBox="0 0 34 22"><path class="solid" d="M0 0h16v22H0zM18 0h16v10H18zM18 12h16v10H18z"/></svg>${chevronDown}</button>
      <div class="title">Adobe Illustrator 2020</div>
      <div class="rule"></div>
      <button class="workspace">传统基本功能 ${chevronDown}</button>
      <div class="rule"></div>
      <label class="search">
        <svg class="glass" viewBox="0 0 22 22" aria-hidden="true"><circle class="line" cx="9" cy="9" r="7.500" stroke-width="2"/><path class="line" stroke-width="2.500" d="M14 14L21 21"/></svg>
        ${chevronDown}
        <input type="search" placeholder="搜索 Adobe Stock" aria-label="搜索 Adobe Stock" />
      </label>
    </header>`;
  }

  private renderControls() {
    return html`<section class="controls">
      <div class="grip-v"></div>
      <div class="state">未选择对象</div>
      <div class="thin"></div>
      <div class="box left-flat">
        <button class="swatch fill" aria-label="填色"></button>
        <button class="drop" aria-label="填色选项">${chevronDown}</button>
      </div>
      <div class="box left-flat gap">
        <button class="swatch stroke" aria-label="描边颜色"><svg width="14" height="14" viewBox="0 0 14 14"><path fill="none" stroke="#fff" stroke-width="2" d="M1 1H13V13H1Z"/><path fill="#fff" d="M4 4h6v6H4z"/></svg></button>
        <button class="drop" aria-label="描边颜色选项">${chevronDown}</button>
      </div>
      <label class="tag w1" for="weight"><span>描边:</span></label>
      <div class="box w-weight">
        <div class="steps"><button aria-label="增大">${chevronUp}</button><button aria-label="减小">${chevronDown}</button></div>
        <input id="weight" value="1 pt" />
        <button class="drop" aria-label="描边粗细列表">${chevronDown}</button>
      </div>
      <div class="box left-flat gap">
        <button class="preview a"><i></i>等比</button>
        <button class="drop" aria-label="变量宽度配置文件">${chevronDown}</button>
      </div>
      <div class="box left-flat gap">
        <button class="preview b"><i></i>基本</button>
        <button class="drop" aria-label="画笔定义">${chevronDown}</button>
      </div>
      <label class="tag w2" for="opacity"><span>不透明度:</span></label>
      <div class="box w-opacity">
        <input id="opacity" value="100%" />
        <button class="drop" aria-label="不透明度滑块">${chevronRight}</button>
      </div>
      <div class="tag w3 plain"><span>样式:</span></div>
      <div class="box left-flat">
        <button class="swatch style" aria-label="图形样式"></button>
        <button class="drop" aria-label="图形样式列表">${chevronDown}</button>
      </div>
      <svg class="cells off" viewBox="0 0 30 30" aria-hidden="true"><path fill="currentColor" d="M4 4h8v8H4zM18 4h8v8h-8zM4 18h8v8H4zM18 18h8v8h-8zM0 14h30v2H0zM14 0h2v30h-2z"/></svg>
      <button class="snap" aria-label="对齐像素"><svg viewBox="0 0 132 132">${snapPoint}</svg></button>
      <button class="snapmore off" aria-label="对齐选项">${chevronDown}</button>
      <button class="list" aria-label="面板菜单"><svg width="22" height="16" viewBox="0 0 22 16"><path class="solid" d="M0 0h4v4H0zM0 6h4v4H0zM0 12h4v4H0zM6 2h16v2H6zM6 8h16v2H6zM6 14h16v2H6z"/></svg></button>
    </section>`;
  }

  private renderToolbox() {
    const modes = [
      svg`<circle class="tint" cx="24" cy="24" r="22" stroke-width="5"/><rect class="solid" x="24" y="24" width="36" height="36" rx="2"/>`,
      svg`<rect class="solid" x="24" y="24" width="36" height="36" rx="2"/><circle cx="24" cy="24" r="26" fill="#535353"/><circle class="tint" cx="24" cy="24" r="22" stroke-width="5"/>`,
      svg`<circle cx="30" cy="24" r="22" fill="none" stroke="#6e6e6e" stroke-width="5"/><path d="M30 24H50Q48 42 30 44Z" fill="#6e6e6e"/>`,
    ];
    return html`<aside class="toolbox">
      <div class="bar"><button aria-label="折叠工具栏">${doubleLeft}</button></div>
      <div class="grip"></div>
      <div class="tools">${tools.map((t, i) => this.renderTool(t, i))}</div>
      <div class="split"></div>
      <div class="paint">
        <button class="f" aria-label="填色"></button>
        <button class="s" aria-label="描边"><svg viewBox="0 0 72 72"><path fill="#2c2c2c" fill-rule="evenodd" d="M0 0H72V72H0ZM22 22V50H50V22Z"/><path fill="#fff" fill-rule="evenodd" d="M2 2H70V70H2ZM18 18V54H54V18Z"/><path fill="#000" fill-rule="evenodd" d="M4 4H68V68H4ZM18 18V54H54V18Z"/><path fill="none" stroke="#fff" stroke-width="2" d="M19 19H53V53H19Z"/><path fill="none" stroke="#2c2c2c" stroke-width="2" d="M21 21H51V51H21Z"/></svg></button>
        <button class="swap" aria-label="互换填色和描边"><svg viewBox="240 66 108 108"><path class="line" stroke-width="9" d="M308 90H326C338 90 342 98 342 108V122"/><path class="solid" d="M294 90L312 72V108ZM324 120H360L342 138Z"/></svg></button>
        <button class="reset" aria-label="默认填色和描边"><svg viewBox="24 282 108 108"><path class="solid" d="M24 312H78V330H96V384H42V366H24Z"/><path fill="#000" d="M30 318h42v42H30zM48 336h42v42H48z"/><path class="flat" d="M61 349h16v16H61z"/><path class="line" stroke-width="4" d="M61 363H75V349"/><path fill="#000" d="M30 318h42v42H30z"/><path fill="#fff" d="M36 324h30v30H36z"/></svg></button>
      </div>
      <div class="seg">
        ${["", "grad", "none"].map((kind, i) => html`<button class=${classMap({ on: this.paint === i })} aria-label=${["颜色", "渐变", "无"][i]} @click=${() => (this.paint = i)}><span class="chip ${kind}"></span></button>`)}
      </div>
      <div class="seg low">
        ${modes.map((glyph, i) => html`<button class=${classMap({ on: this.drawMode === i })} aria-label=${["正常绘图", "背面绘图", "内部绘图"][i]} @click=${() => (this.drawMode = i)}><svg viewBox="0 0 60 60">${glyph}</svg></button>`)}
      </div>
      <button class="screen" aria-label="更改屏幕模式"><svg width="44" height="32" viewBox="0 0 44 32"><path class="tint" stroke-width="2" d="M1 9H27V31H1Z"/><path class="solid" d="M0 8h18v6H0z"/><path class="tint" stroke-width="2" d="M17 1H43V23H17Z"/><path class="solid" d="M16 0h28v6H16z"/></svg></button>
      <button class="dots" aria-label="编辑工具栏"><svg width="28" height="8" viewBox="0 0 28 8"><g class="solid"><circle cx="4" cy="4" r="3.700"/><circle cx="14" cy="4" r="3.700"/><circle cx="24" cy="4" r="3.700"/></g></svg></button>
    </aside>`;
  }

  private renderDocument() {
    return html`<main class="doc">
      <div class="tabs">
        <div class="tab">
          <button aria-label="关闭文档"><svg viewBox="0 0 12 12"><path d="M1 1L11 11M11 1L1 11" stroke="#fff" stroke-width="2"/></svg></button>
          <span>mySVG (1).svg @ 88.34% (RGB/GPU 预览)</span>
        </div>
      </div>
      <div class="view">
        <div class="canvas"><div class="artboard"></div></div>
        <div class="scroll">
          <button aria-label="向上滚动">${chevronUp}</button>
          <div class="thumb"></div>
          <button aria-label="向下滚动">${chevronDown}</button>
        </div>
      </div>
      <footer class="status">
        <div class="box zoom"><input aria-label="缩放级别" value="88.34%" /><button class="drop" aria-label="缩放级别列表">${chevronDown}</button></div>
        <div class="nav back">
          <button aria-label="首项"><svg class="end" viewBox="0 0 16 16"><path fill="#6e6e6e" d="M0 0h3v16H0zM16 0V16L5 8Z"/></svg></button>
          <button aria-label="上一项"><svg class="one" viewBox="0 0 12 16"><path fill="#6e6e6e" d="M12 0V16L0 8Z"/></svg></button>
        </div>
        <div class="box page"><input aria-label="画板导航" value="1" /><button class="drop" aria-label="画板列表">${chevronDown}</button></div>
        <div class="nav fore">
          <button aria-label="下一项"><svg class="one" viewBox="0 0 12 16"><path fill="#6e6e6e" d="M0 0V16L12 8Z"/></svg></button>
          <button aria-label="末项"><svg class="end" viewBox="0 0 16 16"><path fill="#6e6e6e" d="M13 0h3v16h-3zM0 0V16L11 8Z"/></svg></button>
        </div>
        <div class="mode">选择</div>
        <button class="play" aria-label="状态栏菜单"><svg viewBox="0 0 11 18"><path class="solid" d="M0 1V17L11 9Z"/></svg></button>
        <div class="hscroll"><button aria-label="向左滚动">${chevronLeft}</button><button aria-label="向右滚动">${chevronRight}</button></div>
        <div class="corner"></div>
      </footer>
    </main>`;
  }

  private renderRight() {
    return html`<aside class="right">
      <div class="bar"><button aria-label="展开面板">${doubleLeft}</button><button aria-label="折叠为图标">${doubleRight}</button></div>
      <div class="body">
        <nav class="dock">
          ${dock.map((group) => html`<div class="group">
            <div class="grip"></div>
            ${group.map((p) => html`<button aria-label=${p.name}>
              <svg viewBox="156 ${p.y} ${74 * UNIT} ${56 * UNIT}" aria-hidden="true">${p.name === "渐变" ? ramp : nothing}${p.glyph}</svg>
            </button>`)}
          </div>`)}
        </nav>
        <div class="seam"></div>
        <section class="panel">
          <div class="ptabs"><button class="on">属性</button><button class="idle">库</button><div></div></div>
          <div class="sec none"><h2>未选择对象</h2></div>
          <div class="sec docs">
            <h2>文档</h2>
            <div class="field first">
              <label for="unit">单位:</label>
              <div class="pick"><select id="unit"><option>毫米</option></select>${chevronDown}</div>
            </div>
            <div class="field">
              <label for="board">画板:</label>
              <div class="pager">
                <div class="box"><input id="board" value="1" /><button class="drop" aria-label="画板列表">${chevronDown}</button></div>
                <button class="tri" aria-label="上一个画板"><svg viewBox="0 0 10 16"><path fill="#6e6e6e" d="M10 0V16L0 8Z"/></svg></button>
                <button class="tri" aria-label="下一个画板"><svg viewBox="0 0 10 16"><path fill="#6e6e6e" d="M0 0V16L10 8Z"/></svg></button>
              </div>
            </div>
            <div class="field"><button class="push">编辑画板</button></div>
          </div>
          ${optionRows.map((row) => html`<div class="sec opts">
            <h2>${row.title}</h2>
            <div class="row">${row.items.map((o) => html`<button class=${classMap({ opt: true, on: o.on })} aria-label=${o.name} aria-pressed=${o.on}><svg viewBox="0 0 132 132" aria-hidden="true">${o.glyph}</svg></button>`)}</div>
          </div>`)}
          <div class="sec prefs">
            <h2>首选项</h2>
            <div class="key"><label for="inc">键盘增量:</label><input id="inc" value="0.3528 mm" /></div>
            ${["使用预览边界", "缩放边角", "缩放描边和效果"].map((t) => html`<label class="tick"><input type="checkbox" />${t}</label>`)}
          </div>
          <div class="quick">
            <h2>快速操作</h2>
            <div class="row"><button class="push">文档设置</button><button class="push">首选项</button></div>
          </div>
        </section>
      </div>
    </aside>`;
  }

  render() {
    return html`${this.renderTitle()}${this.renderControls()}
      <div class="work">
        ${this.renderToolbox()}
        <div class="seam"></div>
        ${this.renderDocument()}
        <div class="seam"></div>
        ${this.renderRight()}
      </div>`;
  }
}
